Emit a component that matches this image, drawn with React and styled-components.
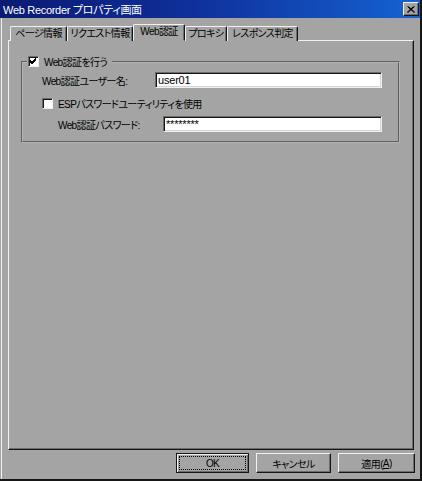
import React from "react";
import styled, { createGlobalStyle } from "styled-components";

const face = "#a4a4a4";
const light = "#f0f0f0";
const shadow = "#6c6c6c";
const dark = "#161616";

const GlobalStyle = createGlobalStyle`
  html, body {
    margin: 0;
    padding: 0;
    background: ${face};
  }
  body {
    font-family: "Liberation Sans", "Noto Sans CJK JP", sans-serif;
    font-size: 10px;
    letter-spacing: -0.6px;
    font-feature-settings: "palt";
    color: #000;
  }
`;

const Window = styled.div`
  width: 422px;
  height: 481px;
  box-sizing: border-box;
  background: ${face};
  border-right: 2px solid ${dark};
  border-bottom: 2px solid ${dark};
  display: flex;
  flex-direction: column;
  overflow: hidden;
`;

const TitleBar = styled.div`
  height: 18px;
  flex: none;
  display: flex;
  align-items: center;
  justify-content: space-between;
  padding: 0 1px 0 3px;
  background: linear-gradient(90deg, #0b1a72 0%, #0f2f9a 45%, #1463d2 100%);
  color: #fff;
  font-size: 11px;
  letter-spacing: -0.3px;
`;

const CloseButton = styled.div`
  width: 16px;
  height: 14px;
  box-sizing: border-box;
  background: ${face};
  border-top: 1px solid ${light};
  border-left: 1px solid ${light};
  border-right: 1px solid ${dark};
  border-bottom: 1px solid ${dark};
  box-shadow: inset -1px -1px ${shadow};
  display: flex;
  align-items: center;
  justify-content: center;
`;

const Body = styled.div`
  flex: 1;
  display: flex;
  flex-direction: column;
  padding: 6px 6px 0 8px;
  box-shadow: inset 1px 0 ${face}, inset 2px 0 ${light};
`;

const TabRow = styled.div`
  display: flex;
  align-items: flex-end;
  height: 17px;
  padding-left: 2px;
  position: relative;
  z-index: 1;
  margin-bottom: -1px;
`;

const Tab = styled.div`
  width: ${({ w }) => w}px;
  height: ${({ selected }) => (selected ? 17 : 15)}px;
  box-sizing: border-box;
  background: ${face};
  border-top: 1px solid ${light};
  border-left: 1px solid ${light};
  border-right: 1px solid ${dark};
  border-bottom: ${({ selected }) => (selected ? `1px solid ${face}` : "none")};
  border-radius: 2px 2px 0 0;
  box-shadow: inset -1px 0 ${shadow};
  text-align: center;
  line-height: 14px;
  white-space: nowrap;
  position: relative;
  z-index: ${({ selected }) => (selected ? 2 : 1)};
`;

const Panel = styled.div`
  width: 406px;
  height: 410px;
  box-sizing: border-box;
  border-top: 1px solid ${light};
  border-left: 1px solid ${light};
  border-right: 1px solid ${dark};
  border-bottom: 1px solid ${dark};
  box-shadow: inset -1px -1px ${shadow};
  padding: 14px 13px 0 12px;
`;

const Group = styled.fieldset`
  margin: 0;
  padding: 2px 16px 9px 19px;
  border: 2px groove #b4b4b4;
  display: flex;
  flex-direction: column;
`;

const Legend = styled.legend`
  display: flex;
  align-items: center;
  gap: 5px;
  padding: 0 5px 0 1px;
  margin-left: -15px;
  height: 13px;
  white-space: nowrap;
`;

const Box = styled.span`
  width: 11px;
  height: 11px;
  flex: none;
  box-sizing: border-box;
  background: #fff;
  border-top: 1px solid ${shadow};
  border-left: 1px solid ${shadow};
  border-right: 1px solid ${light};
  border-bottom: 1px solid ${light};
  box-shadow: inset 1px 1px ${dark};
  display: flex;
  align-items: center;
  justify-content: center;
`;

const Row = styled.div`
  display: flex;
  align-items: center;
  height: 16px;
  margin-top: ${({ top }) => top}px;
  padding-left: ${({ indent }) => indent || 0}px;
  white-space: nowrap;
`;

const Label = styled.span`
  width: ${({ w }) => w}px;
  flex: none;
  margin-left: ${({ gap }) => gap || 0}px;
`;

const Field = styled.div`
  flex: 1;
  height: 16px;
  box-sizing: border-box;
  background: #fff;
  border-top: 1px solid ${shadow};
  border-left: 1px solid ${shadow};
  border-right: 1px solid ${light};
  border-bottom: 1px solid ${light};
  box-shadow: inset 1px 1px ${dark}, inset -1px -1px #d4d4d4;
  padding: 1px 2px;
  line-height: 13px;
  font-size: 11px;
  letter-spacing: -0.2px;
  font-family: "Liberation Sans", sans-serif;
`;

const Footer = styled.div`
  display: flex;
  justify-content: flex-end;
  gap: 7px;
  padding: 3px 0 0 0;
  margin-right: -1px;
`;

const Button = styled.div`
  width: ${({ w }) => w}px;
  height: 20px;
  box-sizing: border-box;
  background: ${face};
  border-top: 1px solid ${light};
  border-left: 1px solid ${light};
  border-right: 1px solid ${dark};
  border-bottom: 1px solid ${dark};
  box-shadow: inset -1px -1px ${shadow};
  display: flex;
  align-items: center;
  justify-content: center;
  ${({ primary }) =>
    primary &&
    `
    border: 1px solid ${dark};
    box-shadow: inset 1px 1px ${light}, inset -1px -1px ${shadow}, inset -2px -2px ${face};
    padding: 2px;
  `}
`;

const Focus = styled.div`
  width: 100%;
  height: 100%;
  box-sizing: border-box;
  border: 1px dotted #000;
  display: flex;
  align-items: center;
  justify-content: center;
`;

const Check = () => (
  <svg width="9" height="9" viewBox="0 0 9 9">
    <path d="M1 4 L3 6 L7 2 M1 5 L3 7 L7 3 M1 3 L3 5 L7 1" stroke="#000" strokeWidth="1" fill="none" />
  </svg>
);

const tabs = [
  { name: "ページ情報", w: 57 },
  { name: "リクエスト情報", w: 66 },
  { name: "Web認証", w: 52, selected: true },
  { name: "プロキシ", w: 42 },
  { name: "レスポンス判定", w: 71 },
];

export default function App() {
  return (
    <>
      <GlobalStyle />
      <Window>
        <TitleBar>
          <span>Web Recorder プロパティ画面</span>
          <CloseButton>
            <svg width="8" height="7" viewBox="0 0 8 7">
              <path d="M0.5 0.5 L7 6.5 M1.5 0.5 L8 6.5 M6.5 0.5 L0 6.5 M7.5 0.5 L1 6.5" stroke="#000" strokeWidth="1" />
            </svg>
          </CloseButton>
        </TitleBar>
        <Body>
          <TabRow>
            {tabs.map((t) => (
              <Tab key={t.name} w={t.w} selected={t.selected}>
                {t.name}
              </Tab>
            ))}
          </TabRow>
          <Panel>
            <Group>
              <Legend>
                <Box>
                  <Check />
                </Box>
                Web認証を行う
              </Legend>
              <Row top={2}>
                <Label w={113}>Web認証ユーザー名:</Label>
                <Field>user01</Field>
              </Row>
              <Row top={7}>
                <Box />
                <Label gap={5}>ESPパスワードユーティリティを使用</Label>
              </Row>
              <Row top={5} indent={16}>
                <Label w={105}>Web認証パスワード:</Label>
                <Field>********</Field>
              </Row>
            </Group>
          </Panel>
          <Footer>
            <Button w={73} primary>
              <Focus>OK</Focus>
            </Button>
            <Button w={75}>キャンセル</Button>
            <Button w={77}>
              適用(<u>A</u>)
            </Button>
          </Footer>
        </Body>
      </Window>
    </>
  );
}
